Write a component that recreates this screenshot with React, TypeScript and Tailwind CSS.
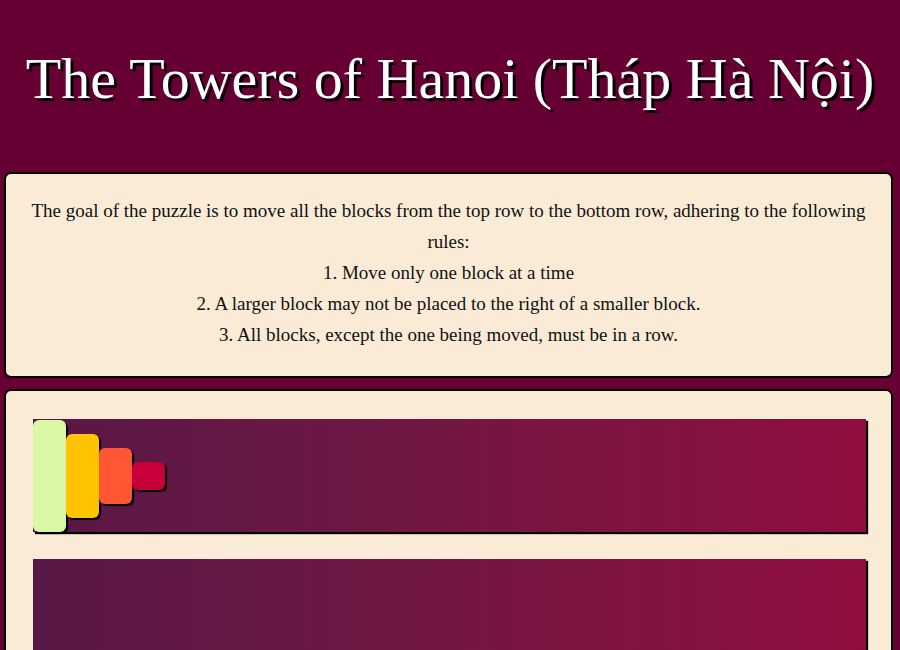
import React from "react";

const blocks = [
  { h: "h-[112px]", c: "bg-[#DAF7A6]" },
  { h: "h-[84px]", c: "bg-[#FFC300]" },
  { h: "h-[56px]", c: "bg-[#FF5733]" },
  { h: "h-[28px]", c: "bg-[#C70039]" },
];

export default function App() {
  return (
    <div className="min-h-[650px] bg-[#660033] pb-4" style={{ fontFamily: '"Liberation Serif", "DejaVu Serif", serif' }}>
      <header className="h-[172px] flex items-center justify-center pb-[14px]">
        <h1 className="text-white text-[58px] leading-none [text-shadow:3px_3px_0_#000]">
          The Towers of Hanoi (Tháp Hà Nội)
        </h1>
      </header>
      <div className="ml-[4px] mr-[7px]">
        <section className="bg-[#FAEBD7] border-2 border-black rounded-[7px] px-4 pt-[21px] pb-[26px] text-center text-[19px] leading-[31px] text-[#111]">
          <p>
            The goal of the puzzle is to move all the blocks from the top row to the bottom row, adhering to the following rules:
          </p>
          <p>1. Move only one block at a time</p>
          <p>2. A larger block may not be placed to the right of a smaller block.</p>
          <p>3. All blocks, except the one being moved, must be in a row.</p>
        </section>
        <section className="mt-[11px] bg-[#FAEBD7] border-2 border-black rounded-[7px] pl-[27px] pr-[25px] pt-[28px] pb-[28px] flex flex-col gap-[27px]">
          <div className="h-[113px] bg-gradient-to-r from-[#581845] to-[#900C3F] shadow-[2px_2px_1px_#000] flex items-center">
            {blocks.map((b, i) => (
              <div key={i} className={`w-[33px] ${b.h} ${b.c} rounded-[6px] shadow-[2px_2px_1px_#000]`} />
            ))}
          </div>
          <div className="h-[113px] bg-gradient-to-r from-[#581845] to-[#900C3F] shadow-[2px_2px_1px_#000]" />
        </section>
      </div>
    </div>
  );
}
